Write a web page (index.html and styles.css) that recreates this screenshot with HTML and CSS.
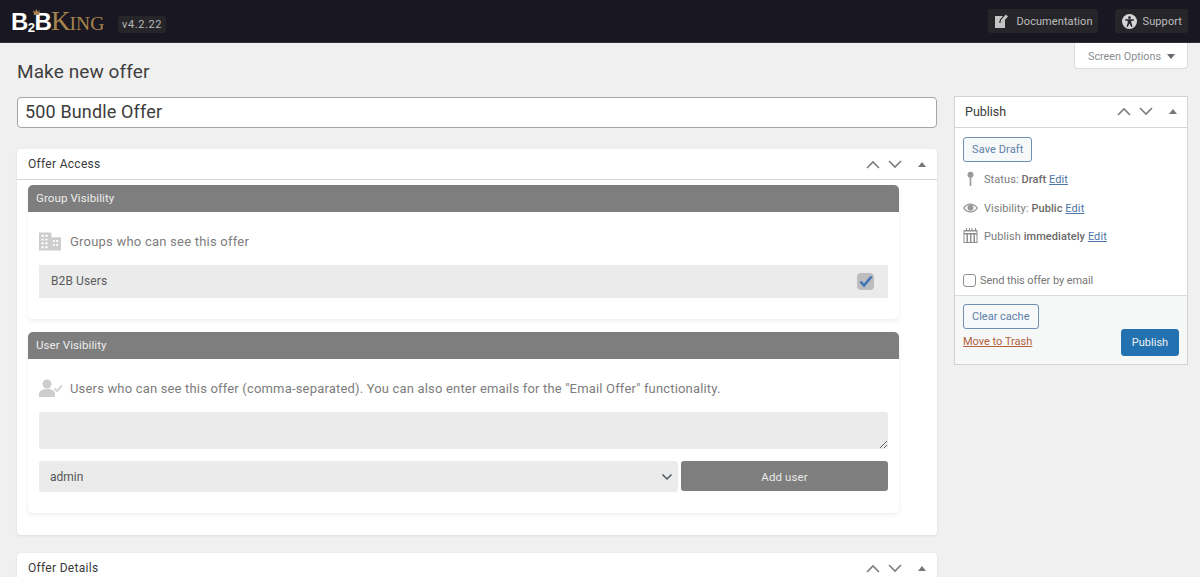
FILE: index.html
```html
<!DOCTYPE html>
<html lang="en">
<head>
<meta charset="utf-8">
<title>Make new offer</title>
<link rel="stylesheet" href="styles.css">
</head>
<body>
<header class="topbar">
  <div class="brand">
    <span class="logo"><span class="logo-b">B<sub>2</sub>B</span><span class="logo-k">K<small>ING</small></span><svg class="crown" width="7" height="6" viewBox="0 0 7 6"><path fill="#a9844e" d="M0 1 2 3 3.500 0 5 3 7 1 6 6H1z"/></svg></span>
    <span class="version">v4.2.22</span>
  </div>
  <div class="top-links">
    <a class="top-btn"><svg width="13" height="14" viewBox="0 0 13 14"><path fill="#c4c4c4" d="M0 2h8L5 5.500 4 9 7.500 8 10 5.500V14H0z"/><path fill="#c4c4c4" d="M6 6 10.800.5 13 2.500 8 8 5.500 8.700z"/></svg>Documentation</a>
    <a class="top-btn support"><svg width="15" height="15" viewBox="0 0 16 16"><circle cx="8" cy="8" r="8" fill="#d5d5d5"/><circle cx="8" cy="3.800" r="1.500" fill="#26262c"/><path fill="#26262c" d="M3.300 5.500 12.700 5.500 12.700 6.800 9.800 7.500 10 9.500 11.200 13.300 9.900 13.800 8 10.200 6.100 13.800 4.800 13.300 6 9.500 6.200 7.500 3.300 6.800z"/></svg>Support</a>
  </div>
</header>
<div class="screen-row"><button class="screen-options">Screen Options<span class="caret"></span></button></div>
<main class="wrap">
  <div class="content">
    <h1>Make new offer</h1>
    <input class="title-input" type="text" value="500 Bundle Offer">
    <section class="postbox access">
      <div class="box-head">
        <h2>Offer Access</h2>
        <span class="handles">
          <svg class="chev" viewBox="0 0 14 9"><path d="M1 8 7 2l6 6"/></svg>
          <svg class="chev" viewBox="0 0 14 9"><path d="M1 1l6 6 6-6"/></svg>
          <span class="tri"></span>
        </span>
      </div>
      <div class="access-body">
        <div class="card group-card">
          <div class="card-head">Group Visibility</div>
          <div class="card-body">
            <div class="label-row">
              <svg class="row-icon" width="22" height="19" viewBox="0 0 23 19"><path fill="#cdcdcd" fill-rule="evenodd" d="M0 0h13v5h10v14H0zM2.500 2.500v2h2.500v-2zm4 0v2H9v-2zM2.500 6.500v2h2.500v-2zm4 0v2H9v-2zM2.500 10.500v2h2.500v-2zm4 0v2H9v-2zM2.500 14.500v2h2.500v-2zm4 0v2H9v-2zM14.500 8v2h2v-2zm3.500 0v2h2v-2zM14.500 12v2h2v-2zm3.500 0v2h2v-2z"/></svg>
              <span>Groups who can see this offer</span>
            </div>
            <div class="check-row">
              <span>B2B Users</span>
              <span class="fake-check"><svg width="14" height="13" viewBox="0 0 14 13"><path fill="none" stroke="#3f74b5" stroke-width="2.600" d="M1.500 6.500 5 10.500 12.500 1.500"/></svg></span>
            </div>
          </div>
        </div>
        <div class="card user-card">
          <div class="card-head">User Visibility</div>
          <div class="card-body">
            <div class="label-row users-row">
              <svg class="row-icon" width="24" height="18" viewBox="0 0 24 18"><g fill="#cdcdcd"><circle cx="8" cy="5" r="4.500"/><path d="M0 18v-3c0-3 3-5 8-5s8 2 8 5v3z"/></g><path fill="none" stroke="#d6d6d6" stroke-width="2" d="M15.500 9.500l2.500 2.500 5-5.500"/></svg>
              <span>Users who can see this offer (comma-separated). You can also enter emails for the "Email Offer" functionality.</span>
            </div>
            <textarea class="users-text"></textarea>
            <div class="add-row">
              <div class="select-box">admin<svg width="12" height="8" viewBox="0 0 12 8"><path fill="none" stroke="#50575e" stroke-width="1.500" d="M1.500 1.500 6 6l4.500-4.500"/></svg></div>
              <button class="add-btn">Add user</button>
            </div>
          </div>
        </div>
      </div>
    </section>
    <section class="postbox details">
      <div class="box-head">
        <h2>Offer Details</h2>
        <span class="handles">
          <svg class="chev" viewBox="0 0 14 9"><path d="M1 8 7 2l6 6"/></svg>
          <svg class="chev" viewBox="0 0 14 9"><path d="M1 1l6 6 6-6"/></svg>
          <span class="tri"></span>
        </span>
      </div>
    </section>
  </div>
  <aside class="side">
    <section class="publish">
      <div class="box-head pub-head">
        <h2>Publish</h2>
        <span class="handles">
          <svg class="chev" viewBox="0 0 14 9"><path d="M1 8 7 2l6 6"/></svg>
          <svg class="chev" viewBox="0 0 14 9"><path d="M1 1l6 6 6-6"/></svg>
          <span class="tri"></span>
        </span>
      </div>
      <div class="pub-main">
        <button class="ghost-btn">Save Draft</button>
        <ul class="pub-list">
          <li><svg width="15" height="16" viewBox="0 0 15 16"><circle cx="7.500" cy="3.800" r="3" fill="#999"/><rect x="6.700" y="6" width="1.600" height="9" fill="#999"/></svg><span>Status: <b>Draft</b> <a>Edit</a></span></li>
          <li><svg width="15" height="16" viewBox="0 0 15 16"><path fill="#999" fill-rule="evenodd" d="M0 8c1.800-3 4.500-4.500 7.500-4.500S13.200 5 15 8c-1.800 3-4.500 4.500-7.500 4.500S1.800 11 0 8zm1.500 0c1.400 2 3.500 3.300 6 3.300s4.600-1.300 6-3.300c-1.400-2-3.500-3.300-6-3.300S2.900 6 1.500 8z"/><circle cx="7.500" cy="7.800" r="3" fill="#999"/></svg><span>Visibility: <b>Public</b> <a>Edit</a></span></li>
          <li><svg width="15" height="16" viewBox="0 0 15 16"><path fill="#8f8f8f" fill-rule="evenodd" d="M3 0h1v2h2V0h1v2h1.500V0h1v2H12V0h1v2h1.500v13H.5V2H3zM1.500 3.500V5h12V3.500zm0 3V14H3.500V6.500zm3.500 0V14h2V6.500zm3.500 0V14h2V6.500zm3.500 0V14h1.500V6.500z"/></svg><span>Publish <b>immediately</b> <a>Edit</a></span></li>
        </ul>
        <label class="email-row"><input type="checkbox"><span>Send this offer by email</span></label>
      </div>
      <div class="pub-foot">
        <div class="foot-left">
          <button class="ghost-btn clear">Clear cache</button>
          <a class="trash">Move to Trash</a>
        </div>
        <button class="publish-btn">Publish</button>
      </div>
    </section>
  </aside>
</main>
</body>
</html>
```

FILE: styles.css
```css
* { box-sizing: border-box; }
html, body { margin: 0; height: 577px; overflow: hidden; }
body { background: #f0f0f1; font-family: Roboto, "Liberation Sans", sans-serif; color: #3c434a; font-size: 13px; }
a { cursor: pointer; }
button { font-family: inherit; cursor: pointer; }

.topbar { height: 43px; background: #191822; border-bottom: 1px solid #2c3338; display: flex; justify-content: space-between; align-items: center; padding: 0 12px 0 11px; }
.brand { display: flex; align-items: center; gap: 12px; }
.logo { position: relative; display: flex; align-items: baseline; font-family: "Liberation Serif", serif; width: 95px; height: 24px; line-height: 24px; }
.crown { position: absolute; left: 22px; top: 0; }
.logo-b { color: #fff; font-family: "Liberation Sans", sans-serif; font-weight: 700; font-size: 24px; letter-spacing: -.6px; white-space: nowrap; }
.logo-b sub { font-size: 13px; vertical-align: -2px; line-height: 0; }
.logo-k { color: #a9844e; font-size: 27px; white-space: nowrap; }
.logo-k small { font-size: 19.500px; margin-left: -1px; }
.version { background: #26262a; color: #b8b8b8; font-size: 11px; letter-spacing: .6px; border-radius: 3px; padding: 0 4px; height: 17px; line-height: 17px; margin-top: 7px; }
.top-links { display: flex; gap: 17px; }
.top-btn { display: flex; align-items: center; gap: 8px; height: 24px; padding: 0 5px 0 7px; background: #26262a; border-radius: 3px; color: #bdbdbd; font-size: 11px; letter-spacing: .08px; }
.support { padding-right: 6px; gap: 6px; }

.screen-row { height: 25px; display: flex; justify-content: flex-end; padding-right: 12px; }
.screen-options { display: flex; align-items: center; width: 114px; height: 26px; background: #fff; border: 1px solid #dcdcde; border-top: 0; border-radius: 0 0 4px 4px; color: #8a8d91; font-size: 10.800px; padding: 1px 0 0 13px; }
.caret { margin-left: 6px; border: 4px solid transparent; border-bottom: 0; border-top: 5px solid #646970; }

.wrap { display: flex; align-items: flex-start; padding-left: 17px; gap: 17px; margin-top: -25px; }
.content { width: 920px; flex: none; }
h1 { font-size: 19px; font-weight: 400; color: #3f3f3f; margin: 0; height: 54px; padding-top: 17px; line-height: 24px; letter-spacing: .1px; }
.title-input { display: block; width: 100%; height: 31px; border: 1px solid #a3a5a8; border-radius: 4px; background: #fff; padding: 0 7px 2px; font: 400 18px Roboto, sans-serif; letter-spacing: .15px; color: #3c3c3c; margin-bottom: 21px; outline: 0; }

.postbox { background: #fff; border-radius: 4px; box-shadow: 0 1px 3px rgba(0,0,0,.08); }
.access { height: 386px; margin-bottom: 18px; }
.box-head { height: 31px; display: flex; align-items: center; justify-content: space-between; padding: 0 11px; border-bottom: 1px solid #d6d6d6; }
.box-head h2 { margin: 0; font-size: 12px; font-weight: 400; color: #3a3a3a; letter-spacing: .3px; }
.handles { display: flex; align-items: center; gap: 8px; }
.chev { width: 14px; height: 9px; fill: none; stroke: #7a7d81; stroke-width: 1.600; }
.tri { width: 0; height: 0; margin-left: 8px; border: 4px solid transparent; border-top: 0; border-bottom: 5px solid #777; }

.access-body { padding: 5px 38px 0 11px; }
.card { background: #fff; border-radius: 5px; box-shadow: 0 2px 4px rgba(0,0,0,.07); }
.group-card { height: 134px; margin-bottom: 13px; }
.user-card { height: 181px; }
.card-head { height: 27px; line-height: 26px; background: #7e7e7e; color: #ededed; font-size: 11.500px; font-weight: 400; border-radius: 5px 5px 0 0; padding-left: 8px; letter-spacing: .1px; }
.card-body { padding: 0 11px; }
.label-row { display: flex; align-items: center; gap: 9px; color: #7d7d7d; font-size: 13px; letter-spacing: .22px; height: 53px; padding-top: 5px; }
.users-row { gap: 7px; letter-spacing: .175px; }
.row-icon { flex: none; }
.check-row { height: 33px; background: #ebebeb; display: flex; justify-content: space-between; align-items: center; padding: 0 14px 1px 12px; color: #5a5a5a; font-size: 12px; letter-spacing: .1px; }
.fake-check { width: 17px; height: 17px; border-radius: 4px; background: #bdbdc0; display: flex; align-items: center; justify-content: center; }
.users-text { display: block; width: 100%; height: 37px; background: #ebebeb; border: 0; border-radius: 3px; margin-bottom: 12px; outline: 0; }
.add-row { display: flex; gap: 3px; }
.select-box { width: 639px; height: 31px; background: #ebebeb; border-radius: 3px; display: flex; align-items: center; justify-content: space-between; padding: 0 5px 0 11px; color: #555; font-size: 12px; }
.add-btn { flex: 1; height: 30px; background: #7e7e7e; border: 0; border-radius: 3px; color: #e8e8e8; font-size: 11.500px; letter-spacing: .1px; padding: 1px 0 0; }

.side { width: 234px; flex: none; padding-top: 53px; }
.publish { background: #fff; border: 1px solid #d2d3d5; }
.pub-head { height: 31px; padding: 0 10px 1px; }
.pub-head h2 { font-size: 12.500px; letter-spacing: 0; }
.pub-main { padding: 9px 8px 0; height: 167px; }
.ghost-btn { display: block; height: 25px; background: #f7f8fa; border: 1px solid #6f8fb3; border-radius: 3px; color: #5d7fa8; font-size: 11px; padding: 0 8px; letter-spacing: .1px; }
.clear { letter-spacing: 0; }
.pub-list { list-style: none; margin: 3px 0 0; padding: 0; }
.pub-list li { display: flex; align-items: center; height: 28.500px; font-size: 11px; color: #7c7c7c; letter-spacing: .08px; }
.pub-list li:nth-child(2) { padding-top: 1px; }
.pub-list svg { flex: none; width: 15px; margin-right: 6px; }
.pub-list b { color: #6a6a6a; font-weight: 500; }
.pub-list a { color: #4b76a5; text-decoration: underline; }
.email-row { display: flex; align-items: center; gap: 4px; margin-top: 23px; font-size: 11px; letter-spacing: -.08px; color: #777; }
.email-row input { appearance: none; width: 13px; height: 13px; margin: 0; background: #fff; border: 1px solid #8c8f94; border-radius: 3px; }
.pub-foot { height: 69px; background: #f6f7f7; border-top: 1px solid #dcdcde; display: flex; justify-content: space-between; padding: 8px 8px 0; }
.foot-left { display: flex; flex-direction: column; align-items: flex-start; gap: 6px; }
.trash { color: #b3613d; text-decoration: underline; font-size: 11px; letter-spacing: 0; }
.publish-btn { align-self: flex-start; margin-top: 25px; width: 58px; height: 27px; background: #2271b1; border: 1px solid #2271b1; border-radius: 3px; color: #f0f0f0; font-size: 11px; padding: 0; }
```
